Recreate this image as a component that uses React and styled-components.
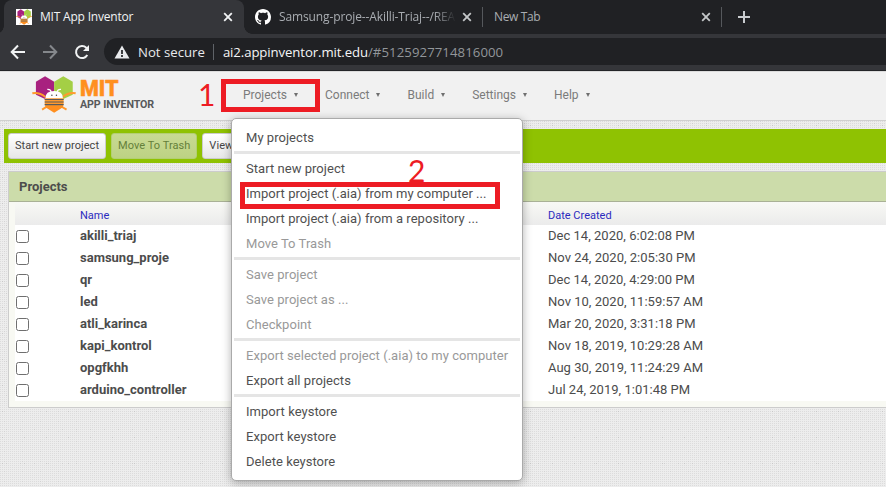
import React from "react";
import styled, { createGlobalStyle } from "styled-components";

const GlobalStyle = createGlobalStyle`
  * { box-sizing: border-box; }
  body { margin: 0; background: #fff; overflow: hidden; }
`;

const ui = `"Open Sans", "Noto Sans", sans-serif`;
const RED = "#ed1c24";

const Window = styled.div`
  position: relative;
  width: 886px;
  height: 487px;
  overflow: hidden;
  display: flex;
  flex-direction: column;
  font-family: Roboto, sans-serif;
  color: #444;
`;

/* Browser chrome */
const TabStrip = styled.div`
  height: 34px;
  flex: none;
  padding-left: 4px;
  display: flex;
  align-items: stretch;
  background: #202124;
`;
const Tab = styled.div`
  position: relative;
  display: flex;
  align-items: center;
  width: ${(p) => p.$width}px;
  padding: 0 ${(p) => (p.$active ? 11 : 10)}px 0 ${(p) => p.$pad}px;
  font: 12px/34px ${ui};
  letter-spacing: ${(p) => p.$track || -0.2}px;
  color: ${(p) => (p.$active ? "#f1f3f4" : "#a9adb2")};
  background: ${(p) => (p.$active ? "#35363a" : "transparent")};
  border-radius: 8px 8px 0 0;
  &::before, &::after {
    content: "";
    display: ${(p) => (p.$active ? "block" : "none")};
    position: absolute;
    bottom: 0;
    width: 8px;
    height: 8px;
  }
  &::before { left: -8px; background: radial-gradient(circle at 0 0, transparent 7.5px, #35363a 8px); }
  &::after { right: -8px; background: radial-gradient(circle at 100% 0, transparent 7.5px, #35363a 8px); }
`;
const TabTitle = styled.span`
  flex: 1;
  min-width: 0;
  overflow: hidden;
  white-space: nowrap;
  margin-right: ${(p) => p.$gap || 0}px;
  mask-image: ${(p) => (p.$fade ? "linear-gradient(90deg, #000 155px, transparent 177px)" : "none")};
`;
const Divider = styled.span`
  align-self: center;
  width: 1px;
  height: 20px;
  background: #55585c;
`;
const NewTab = styled.span`
  display: flex;
  align-items: center;
  padding-left: 16px;
`;
const AddressRow = styled.div`
  height: 37px;
  flex: none;
  padding: 4px 0 5px 10px;
  display: flex;
  align-items: stretch;
  background: #35363a;
  border-bottom: 1px solid #242528;
`;
const NavIcons = styled.div`
  width: 94px;
  display: flex;
  align-items: center;
  gap: 16px;
`;
const Omnibox = styled.div`
  flex: 1;
  display: flex;
  align-items: center;
  padding-left: 10px;
  border-radius: 14px 0 0 14px;
  background: #202124;
  color: #e8eaed;
  font: 13.2px/28px ${ui};
  white-space: pre;
`;
const Security = styled.span`
  margin-left: 8px;
`;
const UrlDivider = styled.span`
  width: 1px;
  height: 16px;
  margin: 0 9px 0 8px;
  background: #5f6368;
`;
const Host = styled.span`color: #f5f6f7; letter-spacing: -0.1px;`;
const Path = styled.span`color: #92969a; letter-spacing: 0.07px;`;

/* Application header */
const Header = styled.header`
  height: 50px;
  flex: none;
  display: flex;
  align-items: center;
  padding-left: 32px;
  background: #f1f1f1;
  border-top: 1px solid #dcdcdc;
  border-bottom: 1px solid #cfcfcf;
`;
const Brand = styled.div`
  width: 211px;
  display: flex;
  align-items: center;
  gap: 4px;
  svg { flex: none; margin-bottom: 4px; }
`;
const BrandText = styled.div`
  display: flex;
  flex-direction: column;
  white-space: nowrap;
`;
const BrandTop = styled.span`
  font: 900 21.5px/18px Roboto, sans-serif;
  color: #ff8f1f;
  -webkit-text-stroke: 0.4px #ff8f1f;
`;
const BrandSub = styled.span`
  font: 700 10.7px/13px Roboto, sans-serif;
  padding-bottom: 2px;
  letter-spacing: -0.11px;
  color: #58595b;
`;
const Nav = styled.nav`
  display: flex;
  gap: 27px;
  padding-bottom: 2px;
`;
const NavItem = styled.span`
  display: flex;
  align-items: center;
  gap: 7px;
  font-size: 12px;
  line-height: 16px;
  color: #7b7b7b;
  &::after {
    content: "";
    border: solid transparent;
    border-width: 4px 2.5px 0;
    border-top-color: #6f6f6f;
  }
`;

/* Page body */
const Workspace = styled.main`
  flex: 1;
  padding: 8px 0 0 4px;
  background-color: #ededed;
  background-image:
    conic-gradient(at 1px 1px, transparent 75%, #c8c8c8 0),
    conic-gradient(at 1px 1px, transparent 75%, #cecece 0),
    conic-gradient(at 1px 1px, transparent 75%, #d3d3d3 0),
    conic-gradient(at 1px 1px, transparent 75%, #dcdcdc 0);
  background-size: 22px 26px, 14px 34px, 18px 10px, 2px 2px;
  background-position: 2px 4px, 6px 2px, 4px 0, 0 0;
`;
const Toolbar = styled.div`
  height: 34px;
  display: flex;
  gap: 5px;
  padding: 4px;
  background: #8fc202;
`;
const Button = styled.button`
  height: 26px;
  border: 1px solid ${(p) => (p.$dim ? "#b3cf73" : "#ccc")};
  border-radius: 3px;
  padding: 0 6px;
  font: 11px/22px Roboto, sans-serif;
  letter-spacing: 0.05px;
  color: ${(p) => (p.$dim ? "#64803a" : "#444")};
  background: ${(p) => (p.$dim ? "linear-gradient(#c8da93, #bdd284)" : "linear-gradient(#fff, #e7e7e7)")};
  white-space: nowrap;
`;
const Panel = styled.section`
  margin: 8px 0 0 4px;
  height: 237px;
  border: solid #ccc;
  border-width: 1px 0 1px 1px;
  background: #f8f9f3;
`;
const PanelTitle = styled.h2`
  margin: 0;
  height: 30px;
  padding-left: 10px;
  font: 700 13px/30px Roboto, sans-serif;
  color: #4c4c4c;
  background: #ccdcaa;
  border-bottom: 1px solid #a9b196;
`;
const Table = styled.div`
  margin-left: 6px;
  background: #fff;
`;
const Row = styled.div`
  display: grid;
  grid-template-columns: 65px 468px 1fr;
  align-items: center;
  height: 22px;
  font-size: 13px;
  line-height: 22px;
  letter-spacing: 0.02px;
  color: #4c4c4c;
`;
const HeadRow = styled(Row)`
  height: 23px;
  padding-top: 5px;
  line-height: 18px;
  font-size: 11px;
  letter-spacing: 0;
  color: #2b2bbf;
  background: linear-gradient(#f8f9f5, #ebebeb);
`;
const Check = styled.span`
  width: 13px;
  height: 13px;
  margin: 1px 0 0 1px;
  border: 1px solid #6f6f6f;
  border-radius: 2.5px;
  background: #fff;
`;
const Name = styled.strong`font-weight: 700; letter-spacing: 0;`;

/* Open dropdown */
const Menu = styled.div`
  position: absolute;
  left: 231px;
  top: 118px;
  width: 292px;
  height: 363px;
  padding: 7px 2px;
  border: 1px solid #aaa;
  border-radius: 5px;
  background: #fff;
  box-shadow: 0 2px 10px rgba(0, 0, 0, 0.3);
`;
const MenuItem = styled.div`
  height: 25px;
  padding-left: 12px;
  font-size: 13px;
  line-height: 23px;
  letter-spacing: 0.04px;
  white-space: nowrap;
  color: ${(p) => (p.$off ? "#999" : "#505050")};
`;
const MenuRule = styled.div`
  height: 3px;
  margin-bottom: 3px;
  background: #e5e5e5;
`;

/* Red annotations laid over the window */
const Outline = styled.div`
  position: absolute;
  left: ${(p) => p.$x}px;
  top: ${(p) => p.$y}px;
  width: ${(p) => p.$w}px;
  height: ${(p) => p.$h}px;
  border: 5px solid ${RED};
`;
const Step = styled.span`
  position: absolute;
  left: ${(p) => p.$x}px;
  top: ${(p) => p.$y}px;
  font: 30px/30px Lato, "Open Sans", sans-serif;
  color: ${RED};
`;

const Close = ({ color = "#c4c7c9" }) => (
  <svg width="10" height="10" viewBox="0 0 10 10" stroke={color} strokeWidth="1.8">
    <path d="M1.2 1.2 8.8 8.8M8.8 1.2 1.2 8.8" />
  </svg>
);

const Bee = ({ width, height }) => (
  <svg width={width} height={height} viewBox="35 28 135 111" preserveAspectRatio="none">
    <path d="M47 45 75 29 103 45V84L75 97 47 84Z" fill="#a8217f" />
    <path d="M103 45 131 29 160 45V84L131 97 103 84Z" fill="#a4cf45" />
    <path d="M36 80C50 77 62 80 76 91M169 80C155 77 143 80 129 91" fill="none" stroke="#ff9a2e" strokeWidth="6" />
    <path d="M66 129 80 120H126L141 129" fill="none" stroke="#ff9a2e" strokeWidth="6" />
    <path d="M76 112H130V122L103 138 76 122Z" fill="#ff8f1f" />
    <path d="M76 95Q76 73 103 73 130 73 130 95V98H76Z" fill="#fff" />
    <path d="M94 76Q92 67 82 68M112 76Q114 67 124 68" fill="none" stroke="#fff" strokeWidth="3.5" />
    <circle cx="96" cy="86" r="2.2" fill="#444" />
    <circle cx="110" cy="86" r="2.2" fill="#444" />
    <rect x="74" y="95" width="58" height="22" rx="3" fill="#ff9a2e" />
    <path d="M74 98.500H132M74 106H132M74 114H132" stroke="#5a5a5a" strokeWidth="3.6" />
  </svg>
);

const Favicon = styled.span`
  display: flex;
  width: 16px;
  height: 16px;
  margin-right: 8px;
  background: #fff;
`;

const GitHubMark = styled.svg`
  margin-right: 8px;
  flex: none;
`;

const projects = [
  ["akilli_triaj", "Dec 14, 2020, 6:02:08 PM"],
  ["samsung_proje", "Nov 24, 2020, 2:05:30 PM"],
  ["qr", "Dec 14, 2020, 4:29:00 PM"],
  ["led", "Nov 10, 2020, 11:59:57 AM"],
  ["atli_karinca", "Mar 20, 2020, 3:31:18 PM"],
  ["kapi_kontrol", "Nov 18, 2019, 10:29:28 AM"],
  ["opgfkhh", "Aug 30, 2019, 11:24:29 AM"],
  ["arduino_controller", "Jul 24, 2019, 1:01:48 PM"],
];

const menu = [
  ["My projects"],
  null,
  ["Start new project"],
  ["Import project (.aia) from my computer ..."],
  ["Import project (.aia) from a repository ..."],
  ["Move To Trash", true],
  null,
  ["Save project", true],
  ["Save project as ...", true],
  ["Checkpoint", true],
  null,
  ["Export selected project (.aia) to my computer", true],
  ["Export all projects"],
  null,
  ["Import keystore"],
  ["Export keystore"],
  ["Delete keystore"],
];

export default function App() {
  return (
    <>
      <GlobalStyle />
      <Window>
        <TabStrip>
          <Tab $active $width={240} $pad={12}>
            <Favicon><Bee width={16} height={16} /></Favicon>
            <TabTitle>MIT App Inventor</TabTitle>
            <Close color="#f1f3f4" />
          </Tab>
          <Tab $width={238} $pad={11} $track={-0.12}>
            <GitHubMark width="16" height="16" viewBox="0 0 16 16" fill="#fff">
              <path d="M8 0C3.58 0 0 3.58 0 8c0 3.54 2.290 6.530 5.470 7.590.4.070.55-.17.55-.38 0-.19-.010-.820-.010-1.490-2.010.37-2.530-.490-2.690-.94-.090-.230-.480-.940-.820-1.130-.280-.150-.680-.520-.010-.530.63-.010 1.080.58 1.230.820.720 1.210 1.870.870 2.330.660.070-.520.280-.870.510-1.070-1.780-.200-3.640-.890-3.640-3.950 0-.870.310-1.590.820-2.150-.080-.200-.360-1.020.080-2.120 0 0 .670-.210 2.200.820.640-.180 1.320-.270 2-.270s1.360.090 2 .270c1.530-1.040 2.200-.820 2.200-.820.440 1.100.160 1.920.080 2.120.510.560.820 1.270.820 2.150 0 3.070-1.870 3.750-3.650 3.950.290.250.540.730.540 1.480 0 1.070-.010 1.930-.010 2.200 0 .210.150.460.550.380A8.010 8.010 0 0 0 16 8c0-4.420-3.580-8-8-8Z" />
            </GitHubMark>
            <TabTitle $fade $gap={4}>Samsung-proje--Akilli-Triaj--/REA</TabTitle>
            <Close />
          </Tab>
          <Divider />
          <Tab $width={238} $pad={11} $track={-0.35}>
            <TabTitle>New Tab</TabTitle>
            <Close />
          </Tab>
          <Divider />
          <NewTab>
            <svg width="12" height="12" viewBox="0 0 12 12" stroke="#c9cccf" strokeWidth="2">
              <path d="M6 0V12M0 6H12" />
            </svg>
          </NewTab>
        </TabStrip>
        <AddressRow>
          <NavIcons>
            <svg width="16" height="16" viewBox="0 0 16 16" fill="none" stroke="#f1f3f4" strokeWidth="2">
              <path d="M15 8H2.500M8 1.500 1.700 8 8 14.500" />
            </svg>
            <svg width="16" height="16" viewBox="0 0 16 16" fill="none" stroke="#85888c" strokeWidth="2">
              <path d="M1 8H13.500M8 1.500 14.300 8 8 14.500" />
            </svg>
            <svg width="16" height="16" viewBox="0 0 16 16">
              <path d="M13.300 11A6 6 0 1 1 12.300 3.800L14 5.500" fill="none" stroke="#f1f3f4" strokeWidth="2" />
              <path d="M15 1V7H9Z" fill="#f1f3f4" />
            </svg>
          </NavIcons>
          <Omnibox>
            <svg width="16" height="14" viewBox="0 0 16 14">
              <path d="M8 0.500 15.500 13.500H0.500Z" fill="#e8eaed" />
              <path d="M8 5V9M8 10V12" stroke="#202124" strokeWidth="1.700" />
            </svg>
            <Security>Not secure</Security>
            <UrlDivider />
            <Host>ai2.appinventor.mit.edu</Host>
            <Path>/#5125927714816000</Path>
          </Omnibox>
        </AddressRow>

        <Header>
          <Brand>
            <Bee width={44} height={37} />
            <BrandText>
              <BrandTop>MIT</BrandTop>
              <BrandSub>APP INVENTOR</BrandSub>
            </BrandText>
          </Brand>
          <Nav>
            {["Projects", "Connect", "Build", "Settings", "Help"].map((label) => (
              <NavItem key={label}>{label}</NavItem>
            ))}
          </Nav>
        </Header>

        <Workspace>
          <Toolbar>
            <Button>Start new project</Button>
            <Button $dim>Move To Trash</Button>
            <Button>View</Button>
          </Toolbar>
          <Panel>
            <PanelTitle>Projects</PanelTitle>
            <Table>
              <HeadRow>
                <span />
                <span>Name</span>
                <span>Date Created</span>
              </HeadRow>
              {projects.map(([name, date]) => (
                <Row key={name}>
                  <Check />
                  <Name>{name}</Name>
                  <span>{date}</span>
                </Row>
              ))}
            </Table>
          </Panel>
        </Workspace>

        <Menu>
          {menu.map((item, i) =>
            item ? <MenuItem key={i} $off={item[1]}>{item[0]}</MenuItem> : <MenuRule key={i} />
          )}
        </Menu>

        <Outline $x={221} $y={79} $w={99} $h={33} />
        <Outline $x={240} $y={182} $w={260} $h={27} />
        <Step $x={198} $y={79}>1</Step>
        <Step $x={408} $y={155}>2</Step>
      </Window>
    </>
  );
}
